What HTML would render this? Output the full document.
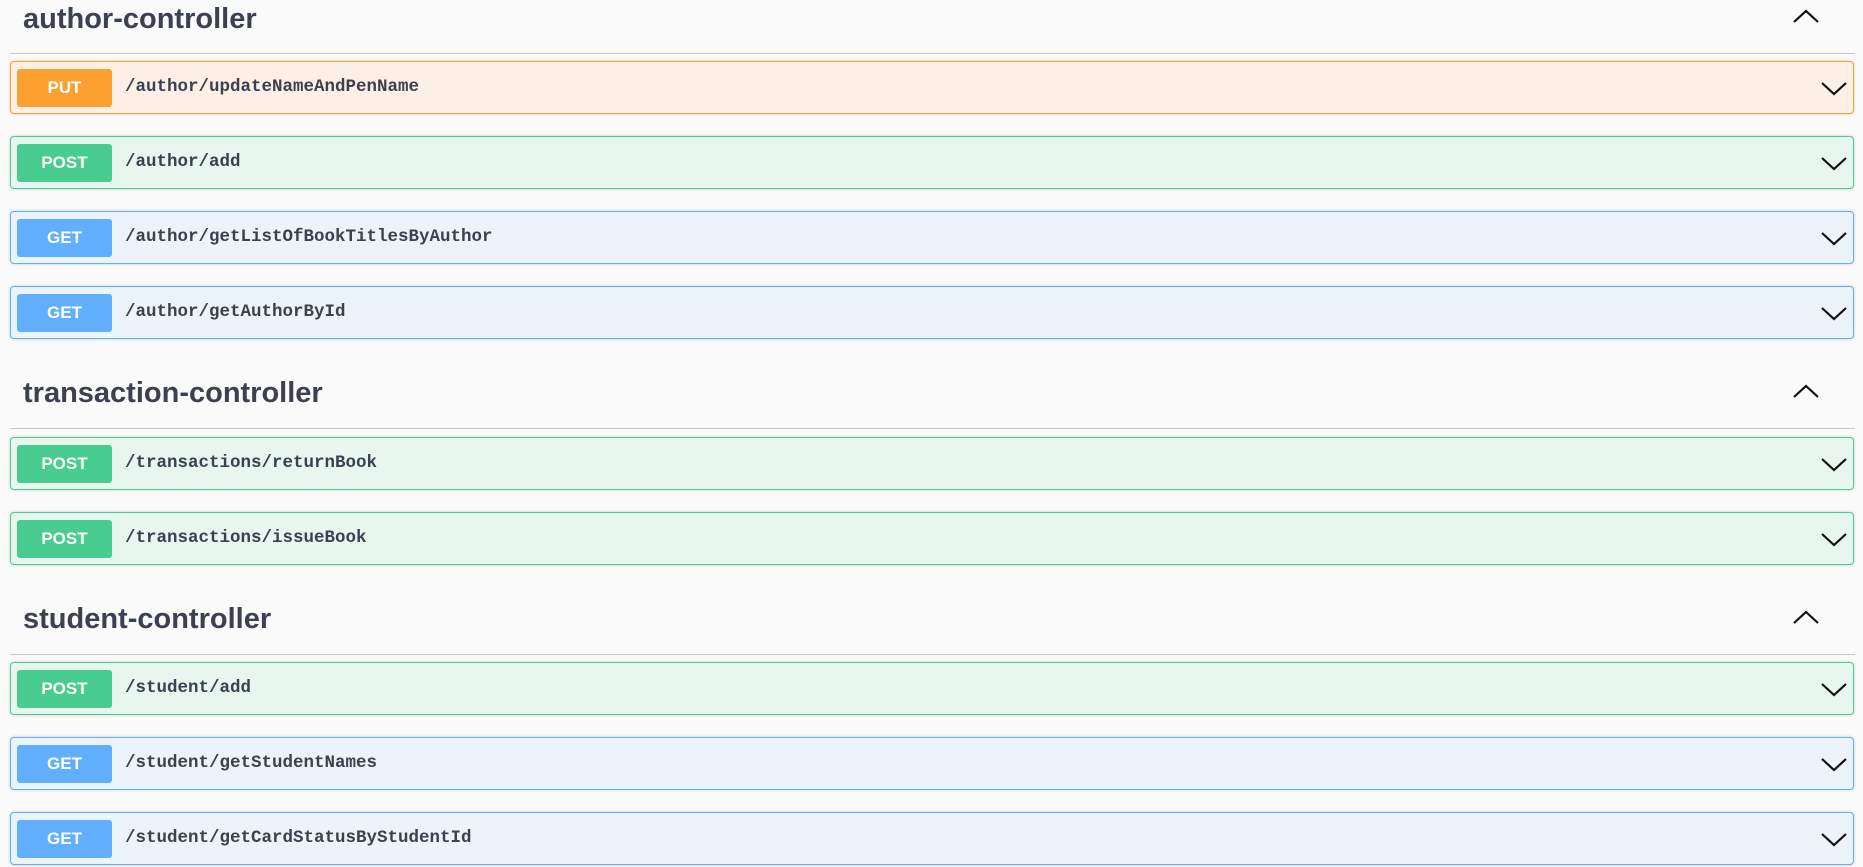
<!DOCTYPE html>
<html><head><meta charset="utf-8"><style>
body{margin:0;width:1863px;height:867px;background:#fafafa;position:relative;overflow:hidden;font-family:"Liberation Sans",sans-serif;color:#3b4151}
.t{position:absolute;left:23px;font-size:29px;font-weight:bold;line-height:34px;margin:0}
.ln{position:absolute;left:10px;width:1845px;height:1px;background:#c8c8cb}
.up{position:absolute;left:1793px;width:26px;height:14px}
.op{position:absolute;left:10px;width:1842px;height:51px;border:1px solid;border-radius:4px;box-shadow:0 0 3px rgba(0,0,0,.19)}
.b{position:absolute;left:6px;top:7px;width:95px;height:38px;border-radius:3px;color:#fff;font-weight:bold;font-size:17px;text-align:center;line-height:38px}
.p{position:absolute;left:114px;top:0;line-height:51px;font-family:"Liberation Mono",monospace;font-weight:bold;font-size:17.5px;color:#3b4151}
.ch{position:absolute;left:1810px;top:20px;width:26px;height:14px}
.put{background:#fcf0e6;border-color:#fca130}.put .b{background:#fca130}
.post{background:#e8f6f0;border-color:#49cc90}.post .b{background:#49cc90}
.get{background:#ebf3fb;border-color:#61affe}.get .b{background:#61affe}
</style></head><body>
<svg width="0" height="0" style="position:absolute"><defs>
<symbol id="d" viewBox="0 0 26 14"><path d="M1 1 L13 12 L25 1" fill="none" stroke="#111" stroke-width="2.2"/></symbol>
<symbol id="u" viewBox="0 0 26 14"><path d="M1 13 L13 2 L25 13" fill="none" stroke="#111" stroke-width="2.2"/></symbol>
</defs></svg>

<div class="t" style="top:2px">author-controller</div>
<svg class="up" style="top:9px"><use href="#u"/></svg>
<div class="ln" style="top:53px"></div>
<div class="op put" style="top:61px"><div class="b">PUT</div><div class="p">/author/updateNameAndPenName</div><svg class="ch"><use href="#d"/></svg></div>
<div class="op post" style="top:136px"><div class="b">POST</div><div class="p">/author/add</div><svg class="ch"><use href="#d"/></svg></div>
<div class="op get" style="top:211px"><div class="b">GET</div><div class="p">/author/getListOfBookTitlesByAuthor</div><svg class="ch"><use href="#d"/></svg></div>
<div class="op get" style="top:286px"><div class="b">GET</div><div class="p">/author/getAuthorById</div><svg class="ch"><use href="#d"/></svg></div>

<div class="t" style="top:376px">transaction-controller</div>
<svg class="up" style="top:384px"><use href="#u"/></svg>
<div class="ln" style="top:428px"></div>
<div class="op post" style="top:437px"><div class="b">POST</div><div class="p">/transactions/returnBook</div><svg class="ch"><use href="#d"/></svg></div>
<div class="op post" style="top:512px"><div class="b">POST</div><div class="p">/transactions/issueBook</div><svg class="ch"><use href="#d"/></svg></div>

<div class="t" style="top:602px">student-controller</div>
<svg class="up" style="top:610px"><use href="#u"/></svg>
<div class="ln" style="top:654px"></div>
<div class="op post" style="top:662px"><div class="b">POST</div><div class="p">/student/add</div><svg class="ch"><use href="#d"/></svg></div>
<div class="op get" style="top:737px"><div class="b">GET</div><div class="p">/student/getStudentNames</div><svg class="ch"><use href="#d"/></svg></div>
<div class="op get" style="top:812px"><div class="b">GET</div><div class="p">/student/getCardStatusByStudentId</div><svg class="ch"><use href="#d"/></svg></div>
</body></html>
